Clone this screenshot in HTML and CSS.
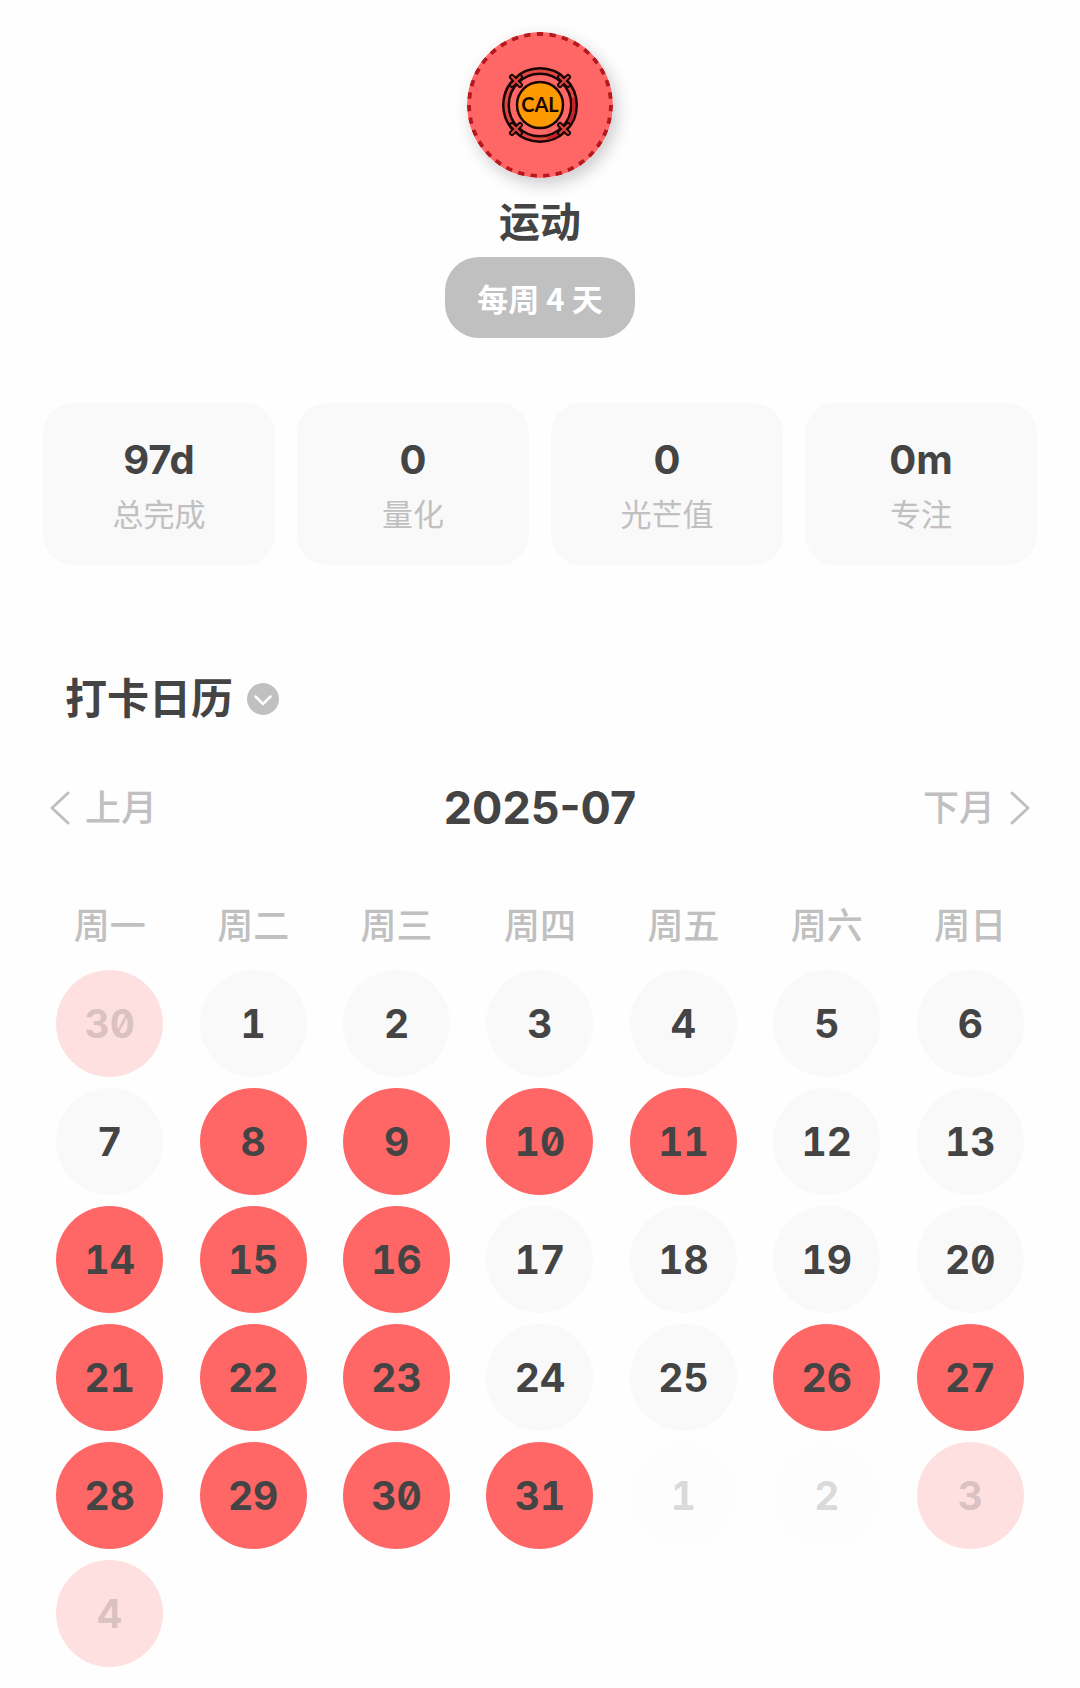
FILE: index.html
```html
<!DOCTYPE html>
<html lang="zh-CN">
<head>
<meta charset="utf-8">
<meta name="viewport" content="width=device-width, initial-scale=1">
<title>运动</title>
<link rel="stylesheet" href="styles.css">
</head>
<body>
<main class="page">
  <header class="habit">
    <svg class="badge" viewBox="0 0 146 146" aria-hidden="true">
      <circle cx="73" cy="73" r="73" fill="#ff6666"/>
      <circle cx="73" cy="73" r="71" fill="none" stroke="#b5191f" stroke-width="4" pathLength="350" stroke-dasharray="5 5"/>
      <circle cx="73" cy="73" r="34" fill="none" stroke="#1a0505" stroke-width="8"/>
      <circle cx="73" cy="73" r="34" fill="none" stroke="#e0463f" stroke-width="3"/>
      <path d="M80 106.500A34 34 0 0 0 106.500 80V66" fill="none" stroke="#c4232b" stroke-width="3"/>
      <g stroke-linecap="round" fill="none">
        <path stroke="#1a0505" stroke-width="6" d="M45 45l8 8M53 45l-8 8M93 45l8 8M101 45l-8 8M45 93l8 8M53 93l-8 8M93 93l8 8M101 93l-8 8"/>
        <path stroke="#e0463f" stroke-width="2" d="M45 45l8 8M53 45l-8 8M93 45l8 8M101 45l-8 8M45 93l8 8M53 93l-8 8M93 93l8 8M101 93l-8 8"/>
      </g>
      <circle cx="73" cy="73" r="23" fill="#ff9900" stroke="#1a0505" stroke-width="2.500"/>
      <text class="badge-text" x="73" y="80" text-anchor="middle">CAL</text>
    </svg>
    <h1 class="habit-name">运动</h1>
    <p class="habit-goal">每周 4 天</p>
  </header>

  <dl class="stats">
    <div class="stat"><dt>总完成</dt><dd>97d</dd></div>
    <div class="stat"><dt>量化</dt><dd>0</dd></div>
    <div class="stat"><dt>光芒值</dt><dd>0</dd></div>
    <div class="stat"><dt>专注</dt><dd>0m</dd></div>
  </dl>

  <section class="log">
    <div class="log-head">
      <h2 class="log-title">打卡日历</h2>
      <button class="toggle" type="button" aria-label="切换视图">
        <svg viewBox="0 0 32 32"><path d="M8.500 13.500l7.500 7.500 7.500-7.500" fill="none" stroke="#fff" stroke-width="2.500" stroke-linecap="round"/></svg>
      </button>
    </div>
    <nav class="months">
      <button class="month-step" type="button">
        <svg class="chevron" viewBox="0 0 20 34"><path d="M18 2L2 17l16 15" fill="none" stroke="currentColor" stroke-width="3" stroke-linecap="round" stroke-linejoin="round"/></svg>
        上月
      </button>
      <h3 class="month-name">2025-07</h3>
      <button class="month-step next" type="button">
        下月
        <svg class="chevron" viewBox="0 0 20 34"><path d="M2 2l16 15L2 32" fill="none" stroke="currentColor" stroke-width="3" stroke-linecap="round" stroke-linejoin="round"/></svg>
      </button>
    </nav>
    <table class="calendar">
      <thead>
        <tr><th>周一</th><th>周二</th><th>周三</th><th>周四</th><th>周五</th><th>周六</th><th>周日</th></tr>
      </thead>
      <tbody>
        <tr><td><span class="day done out">30</span></td><td><span class="day">1</span></td><td><span class="day">2</span></td><td><span class="day">3</span></td><td><span class="day">4</span></td><td><span class="day">5</span></td><td><span class="day">6</span></td></tr>
        <tr><td><span class="day">7</span></td><td><span class="day done">8</span></td><td><span class="day done">9</span></td><td><span class="day done">10</span></td><td><span class="day done">11</span></td><td><span class="day">12</span></td><td><span class="day">13</span></td></tr>
        <tr><td><span class="day done">14</span></td><td><span class="day done">15</span></td><td><span class="day done">16</span></td><td><span class="day">17</span></td><td><span class="day">18</span></td><td><span class="day">19</span></td><td><span class="day">20</span></td></tr>
        <tr><td><span class="day done">21</span></td><td><span class="day done">22</span></td><td><span class="day done">23</span></td><td><span class="day">24</span></td><td><span class="day">25</span></td><td><span class="day done">26</span></td><td><span class="day done">27</span></td></tr>
        <tr><td><span class="day done">28</span></td><td><span class="day done">29</span></td><td><span class="day done">30</span></td><td><span class="day done">31</span></td><td><span class="day out">1</span></td><td><span class="day out">2</span></td><td><span class="day done out">3</span></td></tr>
        <tr><td><span class="day done out">4</span></td></tr>
      </tbody>
    </table>
  </section>
</main>
</body>
</html>
```
FILE: styles.css
```css
* {
  box-sizing: border-box;
  margin: 0;
  padding: 0;
}

body {
  background: #fefefe;
  color: #444;
  font-family: Inter, "Noto Sans CJK SC", sans-serif;
}

button {
  border: 0;
  background: none;
  color: inherit;
  font: inherit;
  cursor: pointer;
}

svg {
  display: block;
}

.page {
  padding: 32px 38px 20px;
}

.habit {
  display: flex;
  flex-direction: column;
  align-items: center;
}

.badge {
  width: 146px;
  height: 146px;
  border-radius: 50%;
  box-shadow: 4px 6px 16px rgba(40, 40, 60, 0.24);
}

.badge-text {
  fill: #1a0505;
  font: 700 20px Lato, sans-serif;
}

.habit-name {
  margin-top: 16px;
  font-size: 41px;
  line-height: 56px;
  font-weight: 700;
}

.habit-goal {
  margin-top: 7px;
  padding: 0 32px;
  border-radius: 34px;
  background: #c0c0c0;
  color: #fff;
  font-family: "Noto Sans CJK SC", sans-serif;
  font-size: 31px;
  line-height: 81px;
  font-weight: 700;
}

.stats {
  display: grid;
  grid-template-columns: repeat(4, 1fr);
  gap: 22px;
  margin: 65px 5px 0;
}

.stat {
  display: flex;
  flex-direction: column-reverse;
  padding: 32px 0 26px;
  border-radius: 30px;
  background: #f9f9f9;
  text-align: center;
}

.stat dt {
  margin-top: 6px;
  color: #c0c0c0;
  font-size: 31px;
  line-height: 48px;
}

.stat dd {
  font-size: 40px;
  line-height: 50px;
  font-weight: 700;
}

.log-head {
  display: flex;
  align-items: center;
  gap: 14px;
  margin: 103px 27px 0;
}

.log-title {
  font-size: 42px;
  line-height: 62px;
  font-weight: 700;
}

.toggle {
  width: 32px;
  height: 32px;
  border-radius: 50%;
  background: #c0c0c0;
}

.months {
  display: grid;
  grid-template-columns: 1fr auto 1fr;
  align-items: center;
  margin: 48px 12px 0;
}

.month-step {
  display: flex;
  align-items: center;
  gap: 15px;
  color: #c0c0c0;
  font-size: 36px;
  line-height: 60px;
  font-weight: 500;
}

.next {
  justify-self: end;
}

.chevron {
  width: 20px;
  height: 34px;
}

.month-name {
  font-size: 45px;
  line-height: 60px;
  font-weight: 700;
}

.calendar {
  width: 100%;
  margin-top: 58px;
  border-collapse: collapse;
  table-layout: fixed;
}

.calendar th {
  padding-bottom: 8px;
  color: #c0c0c0;
  font-size: 36px;
  line-height: 60px;
  font-weight: 500;
}

.calendar td {
  height: 118px;
}

.day {
  display: grid;
  place-items: center;
  width: 107px;
  height: 107px;
  margin: 0 auto;
  border-radius: 50%;
  background: #f9f9f9;
  font-size: 39px;
  font-weight: 700;
  font-feature-settings: "tnum", "zero";
}

.done {
  background: #ff6666;
}

.out {
  background: #fdfdfd;
  color: rgba(68, 68, 68, 0.2);
}

.done.out {
  background: #ffe0e0;
}
```
